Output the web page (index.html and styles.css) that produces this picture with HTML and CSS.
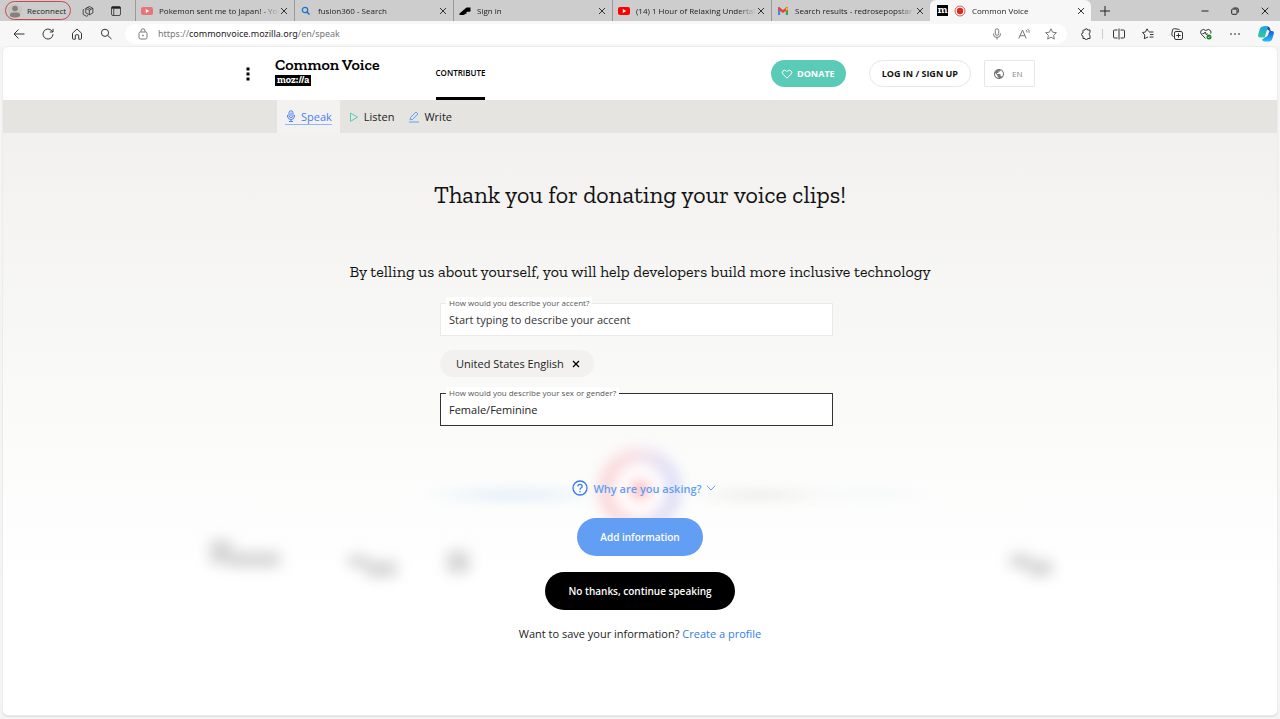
FILE: index.html
```
<!DOCTYPE html>
<html lang="en">
<head>
<meta charset="utf-8">
<meta name="viewport" content="width=device-width, initial-scale=1">
<title>Common Voice</title>
<link rel="stylesheet" href="styles.css">
</head>
<body>
<div class="browser">
  <div class="tabbar">
    <div class="tabbar-start">
      <button class="account"><svg class="avatar" viewBox="0 0 14 14"><circle cx="7" cy="7" r="7" fill="#c9c4c0"/><circle cx="7" cy="4.500" r="2.800" fill="#85807d"/><path d="M2 12.200V11q0-2.500 2.500-2.500h5Q12 8.500 12 11v1.200Q7 15 2 12.200z" fill="#85807d"/></svg>Reconnect</button>
      <button class="icon-button" aria-label="Workspaces"><svg class="icon12" viewBox="0 0 16 16"><path d="M5 4.500l5-2.500 4.500 2.500v6L10 13l-5-2.500zM5 4.500L9.800 7l4.700-2.500M9.800 7v6M7.400 3.200L12 5.700M3 5.500L1.500 6.500v6L6 15l2-1"/></svg></button>
      <button class="icon-button" aria-label="Tab actions"><svg class="icon12" viewBox="0 0 16 16"><rect x="2" y="2" width="12" height="12" rx="2"/><path d="M2 3.700h12" stroke-width="2.500"/><path d="M5 5v9"/></svg></button>
    </div>
    <div class="tab">
      <svg class="favicon" viewBox="0 0 12 12"><rect y="2" width="12" height="8" rx="2" fill="#e87478"/><path d="M4.800 4l3.400 2-3.400 2z" fill="#fff"/></svg>
      <span class="tab-title">Pokemon sent me to Japan! - You</span>
      <button class="close" aria-label="Close tab"><svg viewBox="0 0 8 8"><path d="M1 1l6 6M7 1L1 7"/></svg></button>
    </div>
    <div class="tab">
      <svg class="favicon" viewBox="0 0 12 12"><circle cx="5" cy="5" r="2.700" fill="none" stroke="#1877c9" stroke-width="1.300"/><path d="M7 7l2.500 2.500" stroke="#1877c9" stroke-width="1.600"/></svg>
      <span class="tab-title">fusion360 - Search</span>
      <button class="close" aria-label="Close tab"><svg viewBox="0 0 8 8"><path d="M1 1l6 6M7 1L1 7"/></svg></button>
    </div>
    <div class="tab">
      <svg class="favicon" viewBox="0 0 12 12"><path d="M.5 10V8.500L7.500 2.500h4V6q0 .7-.7.700H8.200q-.7 0-.7.700T8.200 8L4.500 10z" fill="#000"/></svg>
      <span class="tab-title">Sign in</span>
      <button class="close" aria-label="Close tab"><svg viewBox="0 0 8 8"><path d="M1 1l6 6M7 1L1 7"/></svg></button>
    </div>
    <div class="tab">
      <svg class="favicon" viewBox="0 0 12 12"><rect y="2" width="12" height="8" rx="2" fill="#f00"/><path d="M4.800 4l3.400 2-3.400 2z" fill="#fff"/></svg>
      <span class="tab-title">(14) 1 Hour of Relaxing Undertal</span>
      <button class="close" aria-label="Close tab"><svg viewBox="0 0 8 8"><path d="M1 1l6 6M7 1L1 7"/></svg></button>
    </div>
    <div class="tab">
      <svg class="favicon" viewBox="0 0 12 12"><path d="M1 2.500h2.200V10H1z" fill="#4285f4"/><path d="M8.800 2.500H11V10H8.800z" fill="#34a853"/><path d="M1 2.300h1.500L6 5l3.500-2.700H11V4.500L6 8 1 4.500z" fill="#ea4335"/><path d="M9 3l2-.7v2.200L8.800 6z" fill="#fbbc04"/></svg>
      <span class="tab-title">Search results - redrosepopstar1</span>
      <button class="close" aria-label="Close tab"><svg viewBox="0 0 8 8"><path d="M1 1l6 6M7 1L1 7"/></svg></button>
    </div>
    <div class="tab tab-active">
      <span class="moz-favicon">m</span>
      <svg class="favicon" viewBox="0 0 12 12"><circle cx="6" cy="6" r="5" fill="none" stroke="#dd4b3e" stroke-width=".9"/><circle cx="6" cy="6" r="3.200" fill="#d92c20"/></svg>
      <span class="tab-title">Common Voice</span>
      <button class="close" aria-label="Close tab"><svg viewBox="0 0 8 8"><path d="M1 1l6 6M7 1L1 7"/></svg></button>
    </div>
    <button class="icon-button new-tab" aria-label="New tab"><svg class="icon12" viewBox="0 0 12 12"><path d="M6 1v10M1 6h10"/></svg></button>
    <div class="window-controls">
      <button class="icon-button" aria-label="Minimize"><svg class="icon8" viewBox="0 0 8 8"><path d="M.5 4h7"/></svg></button>
      <button class="icon-button" aria-label="Restore"><svg class="icon8" viewBox="0 0 8 8"><rect x=".7" y="2" width="5.300" height="5.300" rx="1"/><path d="M2.500 1h3.300Q7.300 1 7.300 2.500v3"/></svg></button>
      <button class="icon-button" aria-label="Close window"><svg class="icon8" viewBox="0 0 8 8"><path d="M.7.7l6.600 6.600M7.300.7L.7 7.300"/></svg></button>
    </div>
  </div>

  <div class="toolbar">
    <div class="nav-buttons">
      <button class="icon-button" aria-label="Back"><svg class="icon12" viewBox="0 0 12 12"><path d="M11.500 6H1M5.500 1.500L1 6l4.500 4.500"/></svg></button>
      <button class="icon-button" aria-label="Refresh"><svg class="icon12" viewBox="0 0 12 12"><path d="M11 6.200A5 5 0 1 1 9.800 2.800L11 4M11 .8V4H7.800"/></svg></button>
      <button class="icon-button" aria-label="Home"><svg class="icon12" viewBox="0 0 12 12"><path d="M1.500 5.200L6 1l4.500 4.200v5.300q0 .7-.7.700H7.700V7.500q0-.7-.7-.7H5q-.7 0-.7.700v3.700H2.200q-.7 0-.7-.7z"/></svg></button>
      <button class="icon-button" aria-label="Search"><svg class="icon12" viewBox="0 0 12 12"><circle cx="5" cy="4.800" r="3.600"/><path d="M7.600 7.400L11.500 11"/></svg></button>
    </div>
    <div class="address">
      <svg class="icon12 muted" viewBox="0 0 12 12"><rect x="2" y="4" width="8" height="7" rx="1.500"/><path d="M4 4V2.800a2 2 0 0 1 4 0V4"/><circle cx="6" cy="7.500" r=".5"/></svg>
      <div class="url">https://<b>commonvoice.mozilla.org</b>/en/speak</div>
      <button class="icon-button muted" aria-label="Microphone"><svg class="icon12" viewBox="0 0 12 12"><rect x="4.300" y=".8" width="3.400" height="6.500" rx="1.700"/><path d="M2.500 5.500v.5a3.500 3.500 0 0 0 7 0v-.5M6 9.500v2"/></svg></button>
      <button class="icon-button muted" aria-label="Read aloud"><svg class="icon12" viewBox="0 0 12 12"><path d="M.8 10.500L4.500 2l3.700 8.500M2 7.700h5M8 2q1.200 1 1 2.500M9.500.8q2 1.500 1.700 4"/></svg></button>
      <button class="icon-button muted" aria-label="Favorite"><svg class="icon12" viewBox="0 0 12 12"><path d="M6 .8l1.600 3.400 3.800.5-2.800 2.600.7 3.800L6 9.200l-3.300 1.900.7-3.800L.6 4.700l3.800-.5z"/></svg></button>
    </div>
    <div class="tools">
      <button class="icon-button" aria-label="Extensions"><svg class="icon12" viewBox="0 0 12 12"><path d="M3.500 2H5a1.300 1.300 0 0 1 2.600 0H10v2.800a1.300 1.300 0 0 0 0 2.500V10.500H7.600a1.300 1.300 0 0 1-2.600 0H3V8a1.500 1.500 0 1 1 0-3V2.500z"/></svg></button>
      <span class="tool-divider"></span>
      <button class="icon-button" aria-label="Split screen"><svg class="icon12" viewBox="0 0 12 12"><path d="M4.500 2h-3q-1 0-1 1v6q0 1 1 1h3M7.500 2h3q1 0 1 1v6q0 1-1 1h-3M6 .5v11"/></svg></button>
      <button class="icon-button" aria-label="Favorites"><svg class="icon12" viewBox="0 0 12 12"><path d="M7 4h4.500M8 6.500h3.500M7.500 9h4M6.500 3.500L5 .8 3.500 4l-3 .5L2.800 7l-.5 3.700L6 9"/></svg></button>
      <button class="icon-button" aria-label="Collections"><svg class="icon12" viewBox="0 0 12 12"><rect x="3.500" y="3.500" width="8" height="8" rx="1.500"/><path d="M7.500 5.300v4.400M5.300 7.500h4.400M2.500 8.500Q.5 8 .8 6L1.500 2Q2 .5 3.500.7l4 .6q1 .2 1.200 1"/></svg></button>
      <button class="icon-button" aria-label="Browser essentials"><svg class="icon12" viewBox="0 0 12 12"><path d="M5.500 10.500L1.200 6Q0 4.300 1.200 2.500 3.300.3 5.800 2.500q2.700-2.200 4.600 0 1.100 1.500.3 3M2.500 5.500h1.700l1-1.500 1.300 3 1-1.500"/><circle cx="9" cy="9" r="2.500" fill="#168821" stroke="none"/><path d="M7.900 9l.8.800 1.400-1.500" stroke="#fff" stroke-width=".7"/></svg></button>
      <button class="icon-button" aria-label="More"><svg class="icon12" viewBox="0 0 12 12"><path d="M1.300 6h1.400M5.300 6h1.400M9.300 6h1.400" stroke-width="1.400"/></svg></button>
      <button class="icon-button" aria-label="Copilot"><svg class="copilot" viewBox="0 0 16 16"><defs><linearGradient id="cpa" x1="0" y1="0" x2="0" y2="1"><stop offset="0" stop-color="#18a7ef"/><stop offset="1" stop-color="#38c98f"/></linearGradient><linearGradient id="cpb" x1="0" y1="0" x2="0" y2="1"><stop offset="0" stop-color="#173d9d"/><stop offset=".5" stop-color="#2474ec"/><stop offset="1" stop-color="#22c2f4"/></linearGradient></defs><path d="M5 .5h4.500q2 0 2.500 2l.8 2.500H14q2.500 0 1.800 2.800l-1.500 5Q13.500 15.500 11 15.500H6.500q-2 0-2.500-2L9.500 10l2-5z" fill="url(#cpb)"/><path d="M5 .5h5L6.700 11.500H2Q-.5 11.500.2 8.500l1.500-5Q2.500.5 5 .5z" fill="url(#cpa)"/></svg></button>
    </div>
  </div>

  <div class="page">
    <header class="site-header">
      <div class="header-inner">
        <button class="icon-button menu" aria-label="Menu"><svg viewBox="0 0 4 14"><path d="M.5.5h3v3h-3zM.5 5.500h3v3h-3zM.5 10.500h3v3h-3z"/></svg></button>
        <a class="brand" href="#"><span class="brand-name">Common Voice</span><span class="brand-tag">moz://a</span></a>
        <nav class="main-nav"><a class="main-link" href="#">CONTRIBUTE</a></nav>
        <div class="header-actions">
          <a class="pill donate" href="#"><svg class="heart" viewBox="0 0 12 12"><path d="M6 10.200L2 6.200a2.300 2.300 0 0 1 3.300-3.300L6 3.600l.7-.7A2.300 2.300 0 0 1 10 6.200z"/></svg>DONATE</a>
          <a class="pill login" href="#">LOG IN / SIGN UP</a>
          <button class="language"><svg class="globe" viewBox="0 0 24 24"><path d="M12 2C6.480 2 2 6.480 2 12s4.480 10 10 10 10-4.480 10-10S17.520 2 12 2zm-1 17.930c-3.950-.49-7-3.850-7-7.930 0-.62.080-1.210.21-1.790L9 15v1c0 1.100.9 2 2 2v1.930zm6.900-2.540c-.26-.81-1-1.390-1.900-1.390h-1v-3c0-.55-.45-1-1-1H8v-2h2c.55 0 1-.45 1-1V7h2c1.100 0 2-.9 2-2v-.41c2.930 1.190 5 4.060 5 7.410 0 2.080-.8 3.970-2.100 5.390z"/></svg>EN</button>
        </div>
      </div>
    </header>
    <nav class="subnav">
      <div class="subnav-inner">
        <a class="sublink sublink-active" href="#"><span class="sublink-label"><svg class="icon12" viewBox="0 0 12 12"><rect x="4" y=".8" width="4" height="6.700" rx="2"/><path d="M2.500 5v1a3.500 3.500 0 0 0 7 0V5M6 9.500v2M4 11.500h4M6 2.500V6"/></svg>Speak</span></a>
        <a class="sublink" href="#"><svg class="icon12 green" viewBox="0 0 12 12"><path d="M2.500 2l7 4.200-7 4.200z"/></svg>Listen</a>
        <a class="sublink" href="#"><svg class="icon12 blue" viewBox="0 0 12 12"><path d="M2 8.800l.6-2.500L8 1l2 2-5.500 5.300zM1 11h10"/></svg>Write</a>
      </div>
    </nav>

    <main class="content">
      <svg class="backdrop" viewBox="0 0 900 190" aria-hidden="true">
        <defs>
          <filter id="soft" x="-50%" y="-50%" width="200%" height="200%"><feGaussianBlur stdDeviation="7"/></filter>
          <filter id="wide" x="-20%" y="-400%" width="140%" height="900%"><feGaussianBlur stdDeviation="24 6"/></filter>
          <linearGradient id="ring"><stop offset=".1" stop-color="#fbd2d4"/><stop offset=".5" stop-color="#f5dfe7"/><stop offset=".9" stop-color="#dadaf4"/></linearGradient>
        </defs>
        <g filter="url(#wide)"><rect x="270" y="64" width="110" height="10" fill="#e2eff8"/><rect x="530" y="64" width="80" height="10" fill="#ececea"/><rect x="640" y="64" width="80" height="9" fill="#f4f9f7"/></g>
        <g filter="url(#soft)"><circle cx="450" cy="64" r="34" fill="#fff" stroke="url(#ring)" stroke-width="14"/><circle cx="450" cy="64" r="10" fill="#ffb0b3"/>
          <path d="M20 114h22v24H20zM38 126h52v15H38zM158 129h20v12h-20zM176 135h31v16h-31zM257 125h22v22h-22zM820 128h20v14h-20zM838 134h24v16h-24z" fill="#d6d6d6"/></g>
      </svg>
      <h1>Thank you for donating your voice clips!</h1>
      <p class="lead">By telling us about yourself, you will help developers build more inclusive technology</p>
      <form class="profile-form">
        <div class="field">
          <label for="accent">How would you describe your accent?</label>
          <input id="accent" type="text" placeholder="Start typing to describe your accent">
        </div>
        <div class="chip">United States English<button class="chip-remove" type="button" aria-label="Remove accent"><svg viewBox="0 0 8 8"><path d="M1 1l6 6M7 1L1 7"/></svg></button></div>
        <div class="field field-active">
          <label for="gender">How would you describe your sex or gender?</label>
          <select id="gender"><option>Female/Feminine</option></select>
        </div>
      </form>
      <button class="why"><svg class="question" viewBox="0 0 16 16"><circle cx="8" cy="8" r="7"/><path d="M5.800 6.400Q5.900 4.300 8 4.300t2.200 1.900Q10.200 7.400 8.900 8 8 8.500 8 9.700M8 11v1.300"/></svg>Why are you asking?<svg class="chevron" viewBox="0 0 10 6"><path d="M1 .8l4 4.200L9 .8"/></svg></button>
      <button class="action action-add">Add information</button>
      <button class="action action-skip">No thanks, continue speaking</button>
      <p class="save">Want to save your information? <a href="#">Create a profile</a></p>
    </main>
  </div>
</div>
</body>
</html>
```
FILE: styles.css
```
* { box-sizing: border-box; }
body { margin: 0; font-family: "Open Sans", sans-serif; font-size: 11px; color: #222; background: #f5f5f5; }
button, input, select { font: inherit; color: inherit; }
button { padding: 0; border: 0; background: none; }
a { color: inherit; text-decoration: none; }
svg { display: block; flex: none; }
.browser { display: flex; flex-direction: column; min-height: 100vh; }

.icon-button { display: flex; align-items: center; justify-content: center; flex: none; }
.icon8, .icon12 { width: 12px; height: 12px; fill: none; stroke: currentColor; stroke-width: 1; }
.icon8 { width: 8px; height: 8px; }
.muted { color: #777; }

.tabbar { display: flex; height: 21px; background: #cdcdcd; font-family: "Open Sans", sans-serif; font-size: 8px; }
.tabbar-start { display: flex; align-items: center; gap: 16px; width: 135px; padding-left: 5px; flex: none; }
.account { display: flex; align-items: center; gap: 5px; width: 66px; height: 19px; margin-right: -5px; padding-left: 2px; border: 1px solid #c9484f; border-radius: 10px; }
.avatar { width: 14px; height: 14px; }
.tab { display: flex; align-items: center; flex: 0 1 159px; min-width: 0; gap: 6px; padding: 0 6px 0 5px; border-left: 1px solid #999; }
.favicon { width: 12px; height: 12px; }
.tab-title { flex: 1; min-width: 0; margin-right: -5px; overflow: hidden; white-space: nowrap; mask-image: linear-gradient(90deg, #000 85%, transparent); }
.close svg { width: 8px; height: 8px; fill: none; stroke: #333; }
.tab-active { flex-basis: 161px; background: #f7f7f7; border: 0; padding-left: 7px; border-radius: 6px 6px 0 0; }
.moz-favicon { width: 11px; height: 11px; background: #000; color: #fff; font: bold 11px/9px "Zilla Slab", serif; text-align: center; }
.new-tab { width: 28px; }
.window-controls { display: flex; margin-left: auto; gap: 22px; padding-right: 11px; }

.toolbar { display: flex; align-items: center; height: 25px; padding: 0 6px 0 12px; background: #f7f7f7; }
.nav-buttons { display: flex; gap: 17px; width: 112px; margin-left: 1px; color: #333; }
.address { display: flex; align-items: center; flex: 1; height: 20px; gap: 15px; padding: 0 10px 0 12px; border-radius: 10px; background: #fff; }
.url { flex: 1; margin-left: -6px; font: 9px "Noto Sans", sans-serif; color: #777; }
.url b { font-weight: normal; color: #222; }
.tools { display: flex; align-items: center; gap: 17px; margin-left: 13px; color: #333; }
.tool-divider { width: 1px; height: 10px; margin: 0 -7px; background: #ccc; }
.copilot { width: 16px; height: 16px; }

.page { display: flex; flex-direction: column; flex: 1; margin: 0 2px 3px; border: 1px solid #ececec; border-radius: 6px; background: #fff; box-shadow: 0 1px 1px #ddd; overflow: hidden; }
.header-inner { display: flex; align-items: stretch; width: 100%; max-width: 798px; height: 53px; margin: 0 auto; padding: 0 4px 0 1px; }
.menu { width: 12px; margin-right: 21px; }
.menu svg { width: 4px; height: 14px; fill: #000; }
.brand { display: flex; flex-direction: column; align-items: flex-start; padding-top: 8px; color: #000; font-family: "Zilla Slab", serif; font-weight: 600; }
.brand-name { font-size: 16px; line-height: 20px; }
.brand-tag { height: 11px; padding: 0 2px; background: #000; color: #fff; font-size: 10px; font-weight: bold; line-height: 10px; }
.main-nav { display: flex; margin-left: 56px; }
.main-link { display: flex; align-items: center; border-bottom: 3px solid #000; font-size: 8px; font-weight: 600; color: #000; }
.header-actions { display: flex; align-items: center; margin-left: auto; }
.pill { display: flex; align-items: center; justify-content: center; height: 27px; padding: 0 12px; border-radius: 14px; font-size: 9px; font-weight: bold; white-space: nowrap; }
.donate { gap: 4px; padding: 0 11px 0 10px; margin-right: 23px; background: #59cbb7; color: #fff; }
.heart { width: 12px; height: 12px; fill: none; stroke: #fff; }
.login { margin-right: 13px; border: 1px solid #e7e7e7; color: #111; }
.language { display: flex; align-items: center; gap: 7px; width: 51px; height: 27px; padding-left: 8px; border: 1px solid #e7e7e7; border-radius: 1px; font-size: 8px; color: #888; }
.globe { width: 12px; height: 12px; fill: #777; }

.subnav { background: #e5e4e1; }
.subnav-inner { display: flex; width: 100%; max-width: 726px; height: 33px; margin: 0 auto; }
.sublink { display: flex; align-items: center; gap: 4px; margin-left: 8px; padding-right: 6px; color: #222; }
.sublink-active { margin: 0; padding: 0 8px; background: #f3f2f0; color: #4a7fef; }
.sublink-label { display: flex; align-items: center; gap: 4px; height: 17px; border-bottom: 1px solid #8cb9f5; }
.green { color: #59cbb7; }
.blue { color: #629ef4; }

.content { display: flex; flex-direction: column; align-items: center; flex: 1; position: relative; padding: 46px 16px 16px; background: linear-gradient(#f2f1ef, #fafaf9 270px, #fff 450px); }
.content > * { position: relative; }
.content > .backdrop { position: absolute; top: 293px; left: 50%; width: 900px; height: 190px; margin-left: -450px; }
h1, .lead { margin: 0; font-family: "Zilla Slab", serif; font-weight: normal; text-align: center; color: #111; }
h1 { font-size: 24px; line-height: 32px; }
.lead { margin-top: 50px; font-size: 16px; line-height: 22px; }
.profile-form { display: flex; flex-direction: column; align-items: flex-start; width: 100%; max-width: 400px; margin-top: 20px; padding-right: 7px; }
.field { position: relative; width: 100%; height: 33px; }
.field label { position: absolute; top: -6px; left: 6px; padding: 0 3px; background: #fff; font-size: 8px; line-height: 12px; color: #555; }
.field input, .field select { width: 100%; height: 100%; padding: 0 8px; border: 1px solid #ebeae8; border-radius: 0; background: #fff; appearance: none; outline: 0; }
.field input::placeholder { color: #333; opacity: 1; }
.field-active select { border-color: #333; }
.chip { display: flex; align-items: center; gap: 8px; height: 27px; margin: 14px 0 16px; padding: 0 14px 0 16px; border-radius: 14px; background: #f2f1ef; }
.chip-remove svg { width: 8px; height: 8px; fill: none; stroke: #000; stroke-width: 1.3; }
.why { display: flex; align-items: center; gap: 5px; height: 20px; margin-top: 52px; margin-left: 8px; font-weight: 600; color: #629ef4; }
.question { width: 16px; height: 16px; fill: none; stroke: #3579ee; stroke-width: 1.3; }
.chevron { width: 10px; height: 6px; margin-left: -1px; fill: none; stroke: #629ef4; }
.action { height: 38px; border-radius: 19px; font-size: 10px; font-weight: 600; color: #fff; }
.action-add { margin-top: 20px; padding: 0 23px; background: #629ef4; }
.action-skip { margin-top: 16px; padding: 0 23px; background: #000; }
.save { margin: 16px 0 0; line-height: 16px; }
.save a { color: #2f7df0; }
```
